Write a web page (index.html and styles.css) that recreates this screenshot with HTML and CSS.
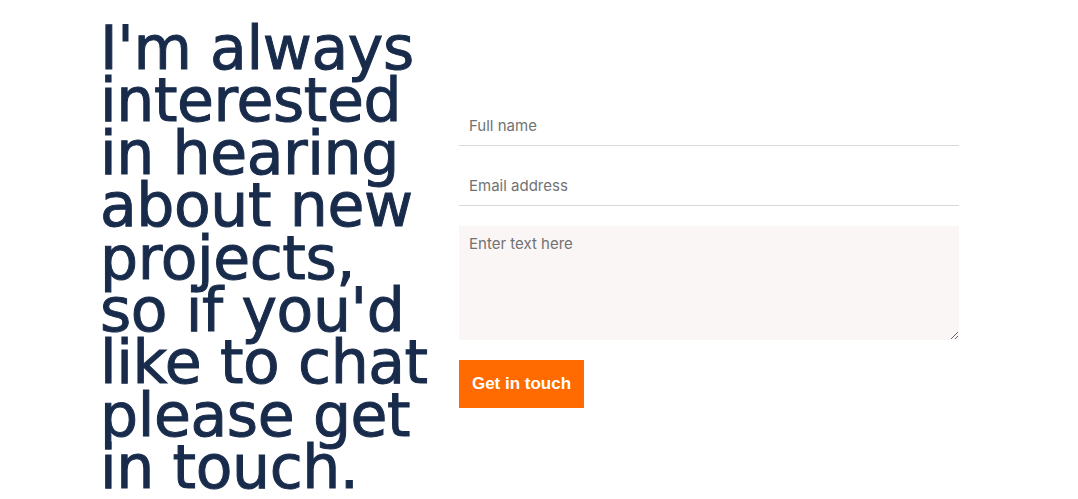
FILE: index.html
```html
<!DOCTYPE html>
<html lang="en">
<head>
<meta charset="utf-8">
<title>Contact</title>
<link rel="stylesheet" href="styles.css">
</head>
<body>
<section class="contact">
  <h1 class="contact-title">I'm always<br>interested<br>in hearing<br>about new<br>projects,<br>so if you'd<br>like to chat<br>please get<br>in touch.</h1>
  <form class="contact-form">
    <input class="field" type="text" placeholder="Full name">
    <input class="field" type="email" placeholder="Email address">
    <textarea class="message" placeholder="Enter text here"></textarea>
    <button class="submit" type="button">Get in touch</button>
  </form>
</section>
</body>
</html>
```
FILE: styles.css
```css
html, body {
  margin: 0;
  padding: 0;
  background: #ffffff;
}

.contact {
  display: flex;
  align-items: center;
  padding: 22px 0 0 100px;
}

.contact-title {
  margin: 0;
  width: 359px;
  flex: none;
  font-family: "DejaVu Sans", sans-serif;
  font-weight: normal;
  font-size: 60px;
  line-height: 52.4px;
  letter-spacing: -0.4px;
  color: #182b4b;
  -webkit-text-stroke: 1px #182b4b;
}

.contact-form {
  width: 500px;
  margin-bottom: 2px;
  display: flex;
  flex-direction: column;
  align-items: flex-start;
  gap: 20px;
}

.field {
  box-sizing: border-box;
  width: 100%;
  height: 40px;
  margin: 0;
  padding: 0 10px;
  border: none;
  border-bottom: 1px solid #d9d9d9;
  background: transparent;
  font-family: "Inter", sans-serif;
  font-size: 15px;
  color: #333;
  outline: none;
}

.message {
  box-sizing: border-box;
  width: 100%;
  height: 114px;
  margin: 0;
  padding: 8px 10px;
  border: none;
  background: #faf6f5;
  font-family: "Inter", sans-serif;
  font-size: 15px;
  color: #333;
  outline: none;
}

.field::placeholder,
.message::placeholder {
  color: #727272;
}

.submit {
  height: 48px;
  width: 125px;
  margin: 0;
  padding: 0;
  border: none;
  background: #ff6b00;
  color: #ffffff;
  font-family: "Liberation Sans", Arial, sans-serif;
  font-weight: bold;
  font-size: 17px;
  cursor: pointer;
}
```
